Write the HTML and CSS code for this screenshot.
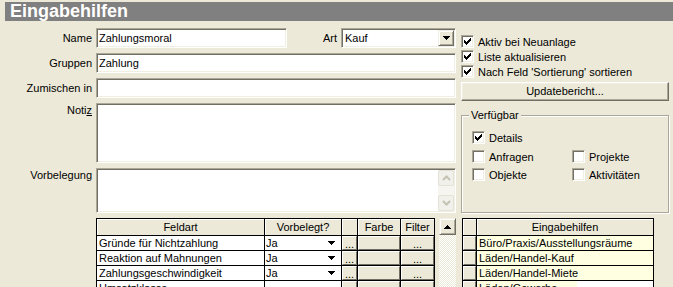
FILE: index.html
```html
<html>
<head>
  <title>Eingabehilfen</title>
  <link rel="stylesheet" href="styles.css">
</head>
<body>

<div class="titlebar">Eingabehilfen</div>

<div class="main">

  <!-- linke Seite: Felder und Feldart-Tabelle -->
  <div class="left">
    <div class="row">
      <div class="lbl">Name</div>
      <div class="field w-name">Zahlungsmoral</div>
      <div class="lbl-art">Art</div>
      <div class="field select">
        <span class="sel-text">Kauf</span>
        <span class="drop-btn">
          <svg width="7" height="4" viewBox="0 0 7 4"><path d="M0 0h7v1h-7z M1 1h5v1h-5z M2 2h3v1h-3z M3 3h1v1h-1z"/></svg>
        </span>
      </div>
    </div>
    <div class="row">
      <div class="lbl">Gruppen</div>
      <div class="field grow">Zahlung</div>
    </div>
    <div class="row">
      <div class="lbl">Zumischen in</div>
      <div class="field grow"></div>
    </div>
    <div class="row">
      <div class="lbl lbl-top">Noti<u>z</u></div>
      <div class="field grow memo notiz"></div>
    </div>
    <div class="row">
      <div class="lbl lbl-top">Vorbelegung</div>
      <div class="field grow memo vorbel">
        <div class="vscroll">
          <div class="vs-btn">
            <svg width="9" height="6" viewBox="0 0 9 6"><polyline points="1,5 4.5,1.5 8,5" fill="none" stroke="#c5c2b2" stroke-width="2"/></svg>
          </div>
          <div class="vs-btn">
            <svg width="9" height="6" viewBox="0 0 9 6"><polyline points="1,1 4.5,4.5 8,1" fill="none" stroke="#c5c2b2" stroke-width="2"/></svg>
          </div>
        </div>
      </div>
    </div>
    <div class="row">
      <div class="lbl"></div>
      <div class="fgrid">
        <div class="hcell">Feldart</div>
        <div class="hcell">Vorbelegt?</div>
        <div class="hcell"></div>
        <div class="hcell">Farbe</div>
        <div class="hcell">Filter</div>

        <div class="cell">Gründe für Nichtzahlung</div>
        <div class="cell combo">Ja<svg width="7" height="4" viewBox="0 0 7 4"><path d="M0 0h7v1h-7z M1 1h5v1h-5z M2 2h3v1h-3z M3 3h1v1h-1z"/></svg></div>
        <div class="cell bcell"><span class="gbtn">...</span></div>
        <div class="cell bcell"><span class="gbtn"></span></div>
        <div class="cell bcell"><span class="gbtn">...</span></div>

        <div class="cell">Reaktion auf Mahnungen</div>
        <div class="cell combo">Ja<svg width="7" height="4" viewBox="0 0 7 4"><path d="M0 0h7v1h-7z M1 1h5v1h-5z M2 2h3v1h-3z M3 3h1v1h-1z"/></svg></div>
        <div class="cell bcell"><span class="gbtn">...</span></div>
        <div class="cell bcell"><span class="gbtn"></span></div>
        <div class="cell bcell"><span class="gbtn">...</span></div>

        <div class="cell">Zahlungsgeschwindigkeit</div>
        <div class="cell combo">Ja<svg width="7" height="4" viewBox="0 0 7 4"><path d="M0 0h7v1h-7z M1 1h5v1h-5z M2 2h3v1h-3z M3 3h1v1h-1z"/></svg></div>
        <div class="cell bcell"><span class="gbtn">...</span></div>
        <div class="cell bcell"><span class="gbtn"></span></div>
        <div class="cell bcell"><span class="gbtn">...</span></div>

        <div class="cell">Umsatzklasse</div>
        <div class="cell combo"></div>
        <div class="cell bcell"><span class="gbtn"></span></div>
        <div class="cell bcell"><span class="gbtn"></span></div>
        <div class="cell bcell"><span class="gbtn"></span></div>
      </div>
      <div class="gscroll">
        <div class="gs-btn">
          <svg width="7" height="4" viewBox="0 0 7 4"><path d="M3 0h1v1h-1z M2 1h3v1h-3z M1 2h5v1h-5z M0 3h7v1h-7z"/></svg>
        </div>
      </div>
    </div>
  </div>

  <!-- rechte Seite: Optionen -->
  <div class="right">
    <div class="check"><span class="box on"><svg width="7" height="7" viewBox="0 0 7 7"><path d="M6 0h1v1h-1z M5 1h2v1h-2z M0 2h1v1h-1z M4 2h3v1h-3z M0 3h2v1h-2z M3 3h3v1h-3z M0 4h5v1h-5z M1 5h3v1h-3z M2 6h1v1h-1z"/></svg></span>Aktiv bei Neuanlage</div>
    <div class="check"><span class="box on"><svg width="7" height="7" viewBox="0 0 7 7"><path d="M6 0h1v1h-1z M5 1h2v1h-2z M0 2h1v1h-1z M4 2h3v1h-3z M0 3h2v1h-2z M3 3h3v1h-3z M0 4h5v1h-5z M1 5h3v1h-3z M2 6h1v1h-1z"/></svg></span>Liste aktualisieren</div>
    <div class="check"><span class="box on"><svg width="7" height="7" viewBox="0 0 7 7"><path d="M6 0h1v1h-1z M5 1h2v1h-2z M0 2h1v1h-1z M4 2h3v1h-3z M0 3h2v1h-2z M3 3h3v1h-3z M0 4h5v1h-5z M1 5h3v1h-3z M2 6h1v1h-1z"/></svg></span>Nach Feld 'Sortierung' sortieren</div>

    <div class="btn update">Updatebericht...</div>

    <div class="groupbox">
      <span class="legend">Verfügbar</span>
      <div class="gb-grid">
        <div class="check"><span class="box on"><svg width="7" height="7" viewBox="0 0 7 7"><path d="M6 0h1v1h-1z M5 1h2v1h-2z M0 2h1v1h-1z M4 2h3v1h-3z M0 3h2v1h-2z M3 3h3v1h-3z M0 4h5v1h-5z M1 5h3v1h-3z M2 6h1v1h-1z"/></svg></span>Details</div>
        <div></div>
        <div class="check"><span class="box"></span>Anfragen</div>
        <div class="check"><span class="box"></span>Projekte</div>
        <div class="check"><span class="box"></span>Objekte</div>
        <div class="check"><span class="box"></span>Aktivitäten</div>
      </div>
    </div>

    <div class="egrid">
      <div class="hcell"></div>
      <div class="hcell">Eingabehilfen</div>
      <div class="cell ind"><span class="gbtn"></span></div>
      <div class="cell yel">Büro/Praxis/Ausstellungsräume</div>
      <div class="cell ind"><span class="gbtn"></span></div>
      <div class="cell yel">Läden/Handel-Kauf</div>
      <div class="cell ind"><span class="gbtn"></span></div>
      <div class="cell yel">Läden/Handel-Miete</div>
      <div class="cell ind"><span class="gbtn"></span></div>
      <div class="cell"><span class="yel-part">Läden/Gewerbe</span></div>
    </div>
  </div>

</div>

</body>
</html>
```

FILE: styles.css
```css
* {
  box-sizing: border-box;
}

body {
  margin: 0;
  height: 287px;
  overflow: hidden;
  background-color: #ECE9D8;
  font-family: "Liberation Sans", Arial, sans-serif;
  font-size: 11px;
  color: #000000;
}

/* Titelbalken */
.titlebar {
  margin: 2px 0 0 5px;
  height: 19px;
  padding-left: 5px;
  background-color: #808080;
  color: #ffffff;
  font-size: 18px;
  font-weight: bold;
  line-height: 19px;
}

.main {
  display: flex;
  padding-top: 7px;
}

.left {
  width: 456px;
  flex: none;
}

.row {
  display: flex;
  margin-bottom: 5px;
}

.lbl {
  width: 96px;
  flex: none;
  padding-right: 4px;
  text-align: right;
  line-height: 20px;
}
.lbl-top {
  line-height: 14px;
}
.lbl-art {
  width: 54px;
  flex: none;
  padding-right: 4px;
  text-align: right;
  line-height: 20px;
}

/* eingesenkte Felder */
.field {
  height: 20px;
  background-color: #ffffff;
  border: 1px solid;
  border-color: #ACA899 #ffffff #ffffff #ACA899;
  box-shadow: inset 1px 1px #716F64, inset -1px -1px #F1EFE2;
  padding: 1px 1px 1px 2px;
  line-height: 16px;
  white-space: nowrap;
}
.w-name {
  width: 191px;
}
.grow {
  flex: 1;
}
.notiz {
  height: 60px;
}
.vorbel {
  height: 45px;
  display: flex;
  justify-content: flex-end;
}

.select {
  width: 115px;
  display: flex;
  padding-left: 3px;
}
.sel-text {
  flex: 1;
}
.drop-btn {
  width: 16px;
  height: 16px;
  display: flex;
  align-items: center;
  justify-content: center;
  background-color: #ECE9D8;
  border: 1px solid;
  border-color: #F1EFE2 #716F64 #716F64 #F1EFE2;
  box-shadow: inset 1px 1px #ffffff, inset -1px -1px #ACA899;
}

/* deaktivierte Bildlaufleiste im Memo */
.vscroll {
  width: 16px;
  height: 100%;
  display: flex;
  flex-direction: column;
  justify-content: space-between;
  background-color: #F6F5F0;
}
.vs-btn {
  width: 16px;
  height: 16px;
  border: 1px solid #E4E2D7;
  border-radius: 2px;
  background-color: #F1F0EA;
  display: flex;
  align-items: center;
  justify-content: center;
}

/* Feldart-Tabelle */
.fgrid {
  width: 339px;
  display: grid;
  grid-template-columns: 168px 77px 16px 43px 34px;
  grid-template-rows: 17px repeat(4, 15px);
  border-left: 1px solid #000000;
  border-top: 1px solid #000000;
}

.hcell {
  border-right: 1px solid #000000;
  border-bottom: 1px solid #000000;
  background-color: #ECE9D8;
  box-shadow: inset 1px 1px #ffffff;
  text-align: center;
  line-height: 16px;
  white-space: nowrap;
}

.cell {
  border-right: 1px solid #000000;
  border-bottom: 1px solid #000000;
  background-color: #ffffff;
  padding: 1px 0 0 2px;
  line-height: 13px;
  white-space: nowrap;
  overflow: hidden;
}
.combo {
  display: flex;
  align-items: center;
  justify-content: space-between;
  padding: 1px 6px 0 1px;
}
.combo svg {
  margin-top: -1px;
}
.bcell {
  padding: 0;
  background-color: #ECE9D8;
}

.gbtn {
  display: block;
  height: 100%;
  border: 1px solid;
  border-color: #ffffff #716F64 #716F64 #ffffff;
  background-color: #ECE9D8;
  text-align: center;
  line-height: 15px;
}

.gscroll {
  width: 17px;
  height: 80px;
  margin-left: 4px;
  background: repeating-conic-gradient(#ffffff 0 25%, #ECE9D8 0 50%) 0 0 / 2px 2px;
}
.gs-btn {
  height: 17px;
  display: flex;
  align-items: center;
  justify-content: center;
  background-color: #ECE9D8;
  border: 1px solid;
  border-color: #F1EFE2 #716F64 #716F64 #F1EFE2;
  box-shadow: inset 1px 1px #ffffff, inset -1px -1px #ACA899;
}

/* rechte Seite */
.right {
  width: 208px;
  flex: none;
  margin-left: 5px;
  padding-top: 6px;
}

.check {
  display: flex;
  align-items: center;
  height: 15px;
  white-space: nowrap;
}

.box {
  width: 13px;
  height: 13px;
  flex: none;
  margin-right: 4px;
  background-color: #ffffff;
  border: 1px solid;
  border-color: #ACA899 #ffffff #ffffff #ACA899;
  box-shadow: inset 1px 1px #716F64, inset -1px -1px #F1EFE2;
  padding: 2px 0 0 2px;
  line-height: 0;
}

.btn {
  background-color: #ECE9D8;
  border: 1px solid;
  border-color: #ffffff #716F64 #716F64 #ffffff;
  box-shadow: inset -1px -1px #ACA899, inset 1px 1px #F1EFE2;
  text-align: center;
}
.update {
  height: 19px;
  margin-top: 3px;
  line-height: 17px;
}

.groupbox {
  position: relative;
  height: 98px;
  margin-top: 14px;
  border: 1px solid #ACA899;
  box-shadow: inset 1px 1px #ffffff, 1px 1px #ffffff;
  padding: 14px 0 0 10px;
}
.legend {
  position: absolute;
  left: 7px;
  top: -8px;
  padding: 0 2px;
  background-color: #ECE9D8;
  line-height: 14px;
}
.gb-grid {
  display: grid;
  grid-template-columns: 100px auto;
  grid-template-rows: 19px 18px 18px;
  align-items: start;
}

/* Eingabehilfen-Tabelle */
.egrid {
  width: 192px;
  margin: 5px 0 0 1px;
  display: grid;
  grid-template-columns: 14px 177px;
  grid-template-rows: 17px repeat(4, 15px);
  border-left: 1px solid #000000;
  border-top: 1px solid #000000;
}
.ind {
  padding: 0;
  background-color: #ECE9D8;
}
.yel {
  background-color: #FFFFE1;
}
.yel-part {
  display: inline-block;
  width: 100px;
  margin: -1px 0 0 -2px;
  padding: 1px 0 0 2px;
  background-color: #FFFFE1;
}
```
